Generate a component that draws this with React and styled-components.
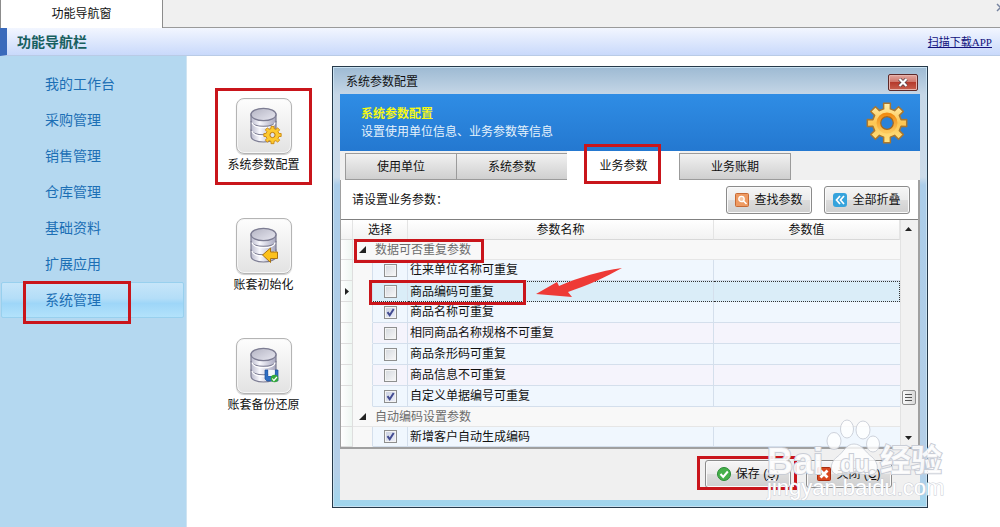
import React, { useState } from "react";
import styled, { createGlobalStyle, css } from "styled-components";

const GlobalStyle = createGlobalStyle`
  * {
    box-sizing: border-box;
  }
  body {
    margin: 0;
    background: #fff;
    overflow: hidden;
    font-family: "Liberation Sans", "Noto Sans CJK SC", sans-serif;
    font-size: 12px;
    line-height: 16px;
    color: #111;
  }
  button {
    font: inherit;
    color: inherit;
    padding: 0;
    cursor: pointer;
  }
`;

//page shell
const Page = styled.div`
  min-height: 100vh;
  display: flex;
  flex-direction: column;
`;
const TopTabs = styled.div`
  display: flex;
  height: 28px;
`;
const TopTab = styled.button`
  width: 163px;
  background: #fff;
  border: 1px solid #8c8c8c;
  border-width: 0 1px;
`;
const TopFill = styled.div`
  flex: 1;
  display: flex;
  justify-content: flex-end;
  background: #f0f0f0;
  border-bottom: 1px solid #9a9a9a;
`;
const TopClose = styled.button`
  height: 14px;
  margin-right: -5px;
  border: none;
  background: none;
`;
const Header = styled.header`
  display: flex;
  align-items: center;
  justify-content: space-between;
  height: 28px;
  padding: 0 8px 0 10px;
  border-left: 7px solid #3a6abb;
  border-bottom: 1px solid #b9cbe6;
  background: linear-gradient(#f2f6ff, #c9d9fb);
  h1 {
    margin: 0;
    font-size: 14px;
    color: #17605f;
  }
  a {
    font-family: "Liberation Serif", "Noto Sans CJK SC", serif;
    font-size: 11px;
    color: #12127c;
  }
`;
const Main = styled.main`
  flex: 1;
  display: flex;
  align-items: stretch;
`;

//side navigation
const Side = styled.nav`
  flex: none;
  width: 187px;
  padding: 10px 2px 0 1px;
  border-right: 1px solid #cfe4f2;
  background: #b4d8f0;
`;
const SideLink = styled.a`
  position: relative;
  display: flex;
  align-items: center;
  height: 36px;
  padding-left: 43px;
  border: 1px solid transparent;
  border-radius: 2px;
  font-size: 14px;
  color: #1c6fb5;
  text-decoration: none;
  ${(p) =>
    p.$active &&
    css`
      border-color: #98d0ee;
      background: linear-gradient(#c6e5f9, #b4def8 45%, #9ed6f8 60%, #b2e2fb);
    `}
`;

const Mark = styled.span`
  position: absolute;
  z-index: 2;
  top: ${(p) => p.$top}px;
  left: ${(p) => p.$left}px;
  width: ${(p) => p.$w}px;
  height: ${(p) => p.$h}px;
  border: 3px solid #c9151b;
  pointer-events: none;
`;

//shortcuts
const Shortcuts = styled.div`
  flex: none;
  width: 145px;
  padding: 32px 20px 0 28px;
  display: flex;
  flex-direction: column;
  gap: 23px;
`;
const Shortcut = styled.button`
  display: flex;
  flex-direction: column;
  align-items: center;
  gap: 3px;
  height: 97px;
  padding-top: 7px;
  border: 3px solid ${(p) => (p.$marked ? "#c9151b" : "transparent")};
  background: none;
  white-space: nowrap;
`;
const Tile = styled.span`
  flex: none;
  display: flex;
  align-items: center;
  justify-content: center;
  width: 56px;
  height: 56px;
  border: 1px solid #b4b4b4;
  border-radius: 8px;
  background: linear-gradient(#fdfdfd, #e2e2e2);
  box-shadow: inset 0 0 0 1px #f6f6f6, 0 1px 1px #ccc;
`;

//dialog
const Dialog = styled.section`
  position: relative;
  flex: 1;
  align-self: flex-start;
  margin: 10px 72px 0 0;
  padding: 0 7px 7px;
  border: 1px solid #26394a;
  background: linear-gradient(#9dbad3, #c6d7e7 28px, #cddcea 110px, #abcde9 118px, #b5cfe8 92%, #9fd6ee);
  box-shadow: inset 0 0 0 1px #c9e2f2;
`;
const TitleBar = styled.div`
  display: flex;
  align-items: center;
  justify-content: space-between;
  height: 27px;
  padding: 3px 2px 0 6px;
`;
const CloseX = styled.button`
  display: flex;
  align-items: center;
  justify-content: center;
  width: 30px;
  height: 17px;
  border: 1px solid #5d2929;
  border-radius: 2px;
  background: linear-gradient(#e3a79f, #cf776c 45%, #b53a2c 50%, #c9614f);
  box-shadow: inset 0 0 0 1px #e7b3ac;
`;
const Banner = styled.div`
  display: flex;
  align-items: center;
  justify-content: space-between;
  height: 57px;
  padding: 0 11px 0 21px;
  background: linear-gradient(#2f8de5, #2478d0);
  color: #e6f2fb;
  line-height: 18px;
  h2 {
    margin: 0;
    font-size: 12px;
    color: #f5f814;
  }
  p {
    margin: 0;
  }
`;
const Tabs = styled.div`
  display: flex;
  align-items: flex-end;
  height: 29px;
  padding-left: 5px;
  background: #f0f0f0;
`;
const Tab = styled.button`
  position: relative;
  width: 112px;
  height: 27px;
  border: 1px solid #9b9b9b;
  margin-right: -1px;
  background: linear-gradient(#f1f1f1, #cfcfcf);
  ${(p) =>
    p.$active &&
    css`
      width: 113px;
      height: 29px;
      border-color: transparent;
      background: #fff;
    `}
`;
const Panel = styled.div`
  border: 1px solid #a0a0a0;
  border-width: 0 2px 2px 1px;
  background: #fff;
`;
const Tools = styled.div`
  display: flex;
  align-items: center;
  gap: 12px;
  height: 40px;
  padding: 0 8px 0 11px;
  border-bottom: 1px solid #808080;
  p {
    flex: 1;
    margin: 0;
  }
`;
const PushButton = styled.button`
  display: flex;
  align-items: center;
  justify-content: center;
  gap: 5px;
  width: 86px;
  height: 28px;
  border: 1px solid #8b8b8b;
  border-radius: 3px;
  background: linear-gradient(#f6f6f6, #ebebeb 48%, #dcdcdc 52%, #cfcfcf);
  box-shadow: inset 0 0 0 1px #fafafa;
  white-space: nowrap;
  svg {
    flex: none;
  }
`;

//grid
const GridWrap = styled.div`
  position: relative;
  display: flex;
`;
const Grid = styled.table`
  flex: 1;
  width: 100%;
  table-layout: fixed;
  border-collapse: separate;
  border-spacing: 0;
  th {
    height: 20px;
    padding: 0;
    font-weight: normal;
    background: linear-gradient(#fff, #f2f2f2);
    border-bottom: 1px solid #d8d8d8;
    border-right: 1px solid #e4e4e4;
  }
`;
const Cell = styled.td`
  height: ${(p) => (p.$short ? 20 : 21)}px;
  padding: 0;
  line-height: 16px;
  white-space: nowrap;
  border-bottom: 1px solid #d4dfec;
  border-right: 1px solid #d4dfec;
  background: ${(p) => p.$bg || "#f8f8f8"};
  ${(p) =>
    p.$focus &&
    css`
      border-top: 1px dotted #333;
      border-bottom: 1px dotted #333;
      background: #daedf8;
    `}
  &:last-child {
    border-right: ${(p) => (p.$focus ? "1px dotted #333" : "none")};
  }
`;
const Gutter = styled(Cell)`
  border-color: #dedede;
  background: linear-gradient(90deg, #fff, #eef6f2);
  text-align: center;
  svg {
    display: block;
    margin: 0 auto;
  }
`;
const Indent = styled(Cell)`
  border-bottom-color: #f8f8f8;
`;
const GroupCell = styled(Cell)`
  border-bottom-color: #e6e6e6;
`;
const GroupToggle = styled.button`
  display: flex;
  align-items: center;
  gap: 9px;
  height: 19px;
  padding-left: 6px;
  border: none;
  background: none;
  color: #6c6c6c;
`;
const Check = styled.input`
  appearance: none;
  display: block;
  width: 13px;
  height: 13px;
  margin: 0 auto;
  border: 1px solid #8e8f8f;
  background: linear-gradient(135deg, #d4d8de, #f8f8f8);
  box-shadow: inset 0 0 0 1px #f4f4f4;
  &:checked {
    background: url("data:image/svg+xml,%3Csvg xmlns='http://www.w3.org/2000/svg' viewBox='0 0 11 11'%3E%3Cpath d='M2.5 5.2l2.2 3L8.7 2' fill='none' stroke='%23424b91' stroke-width='2'/%3E%3C/svg%3E"),
      linear-gradient(135deg, #c9d0e0, #eef0fa);
  }
`;
const Name = styled.label`
  display: block;
  padding-left: 2px;
`;
const Scroll = styled.div`
  display: flex;
  flex-direction: column;
  align-items: center;
  width: 18px;
  padding: 6px 2px 6px 0;
  border-left: 1px solid #e2e2e2;
  background: #f1f1f1;
`;
const Thumb = styled.span`
  display: flex;
  flex-direction: column;
  align-items: center;
  justify-content: center;
  gap: 2px;
  width: 14px;
  height: 15px;
  margin: auto 0 29px;
  border: 1px solid #8f8f8f;
  border-radius: 2px;
  background: linear-gradient(90deg, #fafafa, #d8d8d8);
  i {
    width: 7px;
    height: 1px;
    background: #555;
  }
`;
const Arrow = styled.svg`
  position: absolute;
  z-index: 2;
  top: 46px;
  left: 193px;
`;
const Footer = styled.footer`
  display: flex;
  justify-content: flex-end;
  gap: 15px;
  height: 51px;
  padding: 11px 28px 0 0;
  background: #f0f0f0;
`;
const SaveBox = styled.span`
  position: relative;
`;
const Watermark = styled.svg`
  position: absolute;
  z-index: 3;
  right: -19px;
  bottom: 0;
  pointer-events: none;
`;

//icons
const gearPath = (cx, cy, outer, inner, teeth, wide) => {
  const pts = [];
  const step = (Math.PI * 2) / teeth;
  for (let i = 0; i < teeth; i++) {
    const a = i * step - Math.PI / 2;
    [
      [inner, -wide * 1.1],
      [outer, -wide * 0.8],
      [outer, wide * 0.8],
      [inner, wide * 1.1],
    ].forEach(([r, off]) => {
      const t = a + off * step;
      pts.push(`${(cx + r * Math.cos(t)).toFixed(2)} ${(cy + r * Math.sin(t)).toFixed(2)}`);
    });
  }
  return `M${pts.join("L")}Z`;
};

const Database = ({ kind }) => (
  <svg width="40" height="44" viewBox="0 0 40 44">
    <defs>
      <linearGradient id={`db-${kind}`}>
        <stop offset="0" stopColor="#b9b9cc" />
        <stop offset=".35" stopColor="#f8f8fd" />
        <stop offset="1" stopColor="#a5a5bd" />
      </linearGradient>
      <linearGradient id={`top-${kind}`} x2="1" y2="1">
        <stop offset="0" stopColor="#b3b3c2" />
        <stop offset="1" stopColor="#e9e9f2" />
      </linearGradient>
    </defs>
    <path
      d="M7 10v22c0 8 25 8 25 0V10z"
      fill={`url(#db-${kind})`}
      stroke="#7c7c92"
      strokeWidth="1.2"
    />
    <path d="M7 17c0 7 25 7 25 0M7 25.500c0 7 25 7 25 0" fill="none" stroke="#7c7c92" strokeWidth="1.2" />
    <path d="M8 18.500c1 7 23 7 23 0M8 27c1 7 23 7 23 0" fill="none" stroke="#fff" strokeWidth="1.2" />
    <ellipse cx="19.5" cy="10.5" rx="12.5" ry="6.2" fill={`url(#top-${kind})`} stroke="#7c7c92" strokeWidth="1.2" />
    {kind === "gear" && (
      <>
        <path d={gearPath(28.5, 31, 8.8, 6.6, 8, 0.27)} fill="#fdc92f" stroke="#c9860f" strokeWidth=".9" />
        <circle cx="28.5" cy="31" r="2.6" fill="#e3e3ea" stroke="#b9780c" />
      </>
    )}
    {kind === "back" && (
      <path d="M18.5 31l8-7v4h7v6.500h-7v4z" fill="#fcc11c" stroke="#a97313" strokeWidth="1" />
    )}
    {kind === "save" && (
      <>
        <path d="M21 26h3v6h7v-6h3v11H23l-2-2z" fill="#2f6fc4" stroke="#1c4f99" strokeWidth=".7" />
        <path d="M24.300 26h6.500v6h-6.500z" fill="#f2f7fc" />
        <circle cx="30.5" cy="34.5" r="3.8" fill="#35a83c" />
        <path d="M28.3 34.500l1.600 2 3-3.500" fill="none" stroke="#fff" strokeWidth="1.2" />
      </>
    )}
  </svg>
);

const BigGear = () => (
  <svg width="44" height="44" viewBox="0 0 44 44">
    <defs>
      <linearGradient id="gear" x2="0" y2="1">
        <stop offset="0" stopColor="#fff0ae" />
        <stop offset=".5" stopColor="#fdc653" />
        <stop offset="1" stopColor="#ffe485" />
      </linearGradient>
      <linearGradient id="ring" x2="0" y2="1">
        <stop offset="0" stopColor="#f08c12" />
        <stop offset="1" stopColor="#fcc75a" />
      </linearGradient>
    </defs>
    <path
      d={gearPath(22, 22, 20, 14.5, 8, 0.27)}
      fill="url(#gear)"
      stroke="#a9772f"
      strokeWidth="1.5"
      strokeLinejoin="round"
    />
    <circle cx="22" cy="22" r="8.5" fill="none" stroke="url(#ring)" strokeWidth="4" />
    <circle cx="22" cy="22" r="6.3" fill="#2b82d9" stroke="#a8671b" strokeWidth="1.2" />
  </svg>
);

const FindIcon = () => (
  <svg width="14" height="14" viewBox="0 0 14 14">
    <rect x=".5" y=".5" width="13" height="13" rx="1" fill="#ee9a62" stroke="#c76a35" />
    <circle cx="6.5" cy="6" r="2.7" fill="#f7c6a2" stroke="#fff" strokeWidth="1.3" />
    <path d="M8.5 8l3 3" stroke="#fff" strokeWidth="1.6" />
  </svg>
);
const FoldIcon = () => (
  <svg width="14" height="14" viewBox="0 0 14 14">
    <rect width="14" height="14" rx="3" fill="#36a3dc" />
    <path d="M7 3L3.500 7 7 11M11 3L7.500 7l3.500 4" fill="none" stroke="#fff" strokeWidth="1.7" />
  </svg>
);
const SaveIcon = () => (
  <svg width="14" height="14" viewBox="0 0 14 14">
    <circle cx="7" cy="7" r="6.5" fill="#46b04a" stroke="#2a8a34" />
    <path d="M3.500 7l2.700 3 4.600-5.500" fill="none" stroke="#fff" strokeWidth="2" />
  </svg>
);
const ExitIcon = () => (
  <svg width="14" height="14" viewBox="0 0 14 14">
    <rect x=".5" y=".5" width="13" height="13" rx="1" fill="#d9481f" stroke="#a82d10" />
    <path d="M3.500 3.500l7 7M10.500 3.500l-7 7" stroke="#fff" strokeWidth="2.8" />
  </svg>
);
const Triangle = ({ d, size = 7 }) => (
  <svg width={size} height={size} viewBox="0 0 7 7">
    <path d={d} fill="#222" />
  </svg>
);

const menu = ["我的工作台", "采购管理", "销售管理", "仓库管理", "基础资料", "扩展应用", "系统管理"];

const shortcuts = [
  { kind: "gear", text: "系统参数配置" },
  { kind: "back", text: "账套初始化" },
  { kind: "save", text: "账套备份还原" },
];

const tabs = ["使用单位", "系统参数", "业务参数", "业务账期"];

const groups = [
  {
    title: "数据可否重复参数",
    rows: [
      ["往来单位名称可重复", false],
      ["商品编码可重复", false],
      ["商品名称可重复", true],
      ["相同商品名称规格不可重复", false],
      ["商品条形码可重复", false],
      ["商品信息不可重复", false],
      ["自定义单据编号可重复", true],
    ],
  },
  { title: "自动编码设置参数", rows: [["新增客户自动生成编码", true]] },
];
const focused = "商品编码可重复";

const ParamGrid = () => {
  const [checked, setChecked] = useState(
    Object.fromEntries(groups.flatMap((g) => g.rows))
  );
  return (
    <GridWrap>
      <Grid>
        <colgroup>
          <col width="12" />
          <col width="20" />
          <col width="35" />
          <col width="306" />
          <col />
        </colgroup>
        <thead>
          <tr>
            <th></th>
            <th colSpan="2">选择</th>
            <th>参数名称</th>
            <th>参数值</th>
          </tr>
        </thead>
        <tbody>
          {groups.map((group, g) => (
            <React.Fragment key={group.title}>
              <tr>
                <Gutter $short />
                <GroupCell $short colSpan="4">
                  <GroupToggle type="button">
                    <Triangle d="M7 0v7H0z" />
                    {group.title}
                  </GroupToggle>
                </GroupCell>
              </tr>
              {group.rows.map(([name], i) => {
                const look = {
                  $bg: i % 2 ? "#f5f4fc" : "#f0f7fe",
                  $focus: name === focused,
                  $short: g === 1,
                };
                return (
                  <tr key={name}>
                    <Gutter $short={g === 1}>
                      {name === focused && <Triangle d="M2 0l4 3.500L2 7z" />}
                    </Gutter>
                    <Indent $short={g === 1} />
                    <Cell {...look}>
                      <Check
                        id={`p-${g}-${i}`}
                        type="checkbox"
                        checked={checked[name]}
                        onChange={() => setChecked({ ...checked, [name]: !checked[name] })}
                      />
                    </Cell>
                    <Cell {...look}>
                      <Name htmlFor={`p-${g}-${i}`}>{name}</Name>
                    </Cell>
                    <Cell {...look} />
                  </tr>
                );
              })}
            </React.Fragment>
          ))}
        </tbody>
      </Grid>
      <Scroll>
        <Triangle d="M0 5l3.500-4L7 5z" />
        <Thumb>
          <i />
          <i />
          <i />
        </Thumb>
        <Triangle d="M0 2l3.500 4L7 2z" />
      </Scroll>
      <Mark $top={19} $left={13} $w={130} $h={24} />
      <Mark $top={60} $left={28} $w={157} $h={25} />
      <Arrow width="90" height="34" viewBox="0 0 90 34">
        <path d="M88 2C66 5 46 11 25 20l-2-4L2 28l36 3-4-5c18-6 38-15 54-24z" fill="#ee3a36" />
      </Arrow>
    </GridWrap>
  );
};

const App = () => {
  const [tab, setTab] = useState("业务参数");
  return (
    <Page>
      <GlobalStyle />
      <TopTabs>
        <TopTab type="button">功能导航窗</TopTab>
        <TopFill>
          <TopClose type="button" aria-label="关闭">
            <svg width="9" height="9" viewBox="0 0 9 9">
              <path d="M1 1l7 7M8 1l-7 7" stroke="#7784a0" strokeWidth="1.5" />
            </svg>
          </TopClose>
        </TopFill>
      </TopTabs>
      <Header>
        <h1>功能导航栏</h1>
        <a href="#app">扫描下载APP</a>
      </Header>
      <Main>
        <Side>
          {menu.map((item) => (
            <SideLink key={item} href="#menu" $active={item === "系统管理"}>
              {item}
              {item === "系统管理" && <Mark $top={-2} $left={21} $w={108} $h={43} />}
            </SideLink>
          ))}
        </Side>
        <Shortcuts>
          {shortcuts.map(({ kind, text }) => (
            <Shortcut key={kind} type="button" $marked={kind === "gear"}>
              <Tile>
                <Database kind={kind} />
              </Tile>
              {text}
            </Shortcut>
          ))}
        </Shortcuts>
        <Dialog role="dialog" aria-label="系统参数配置">
          <TitleBar>
            系统参数配置
            <CloseX type="button" aria-label="关闭">
              <svg width="10" height="9" viewBox="0 0 10 9">
                <path d="M1.500 1l7 7M8.500 1l-7 7" stroke="#54424a" strokeWidth="3.6" />
                <path d="M1.500 1l7 7M8.500 1l-7 7" stroke="#fff" strokeWidth="2.2" />
              </svg>
            </CloseX>
          </TitleBar>
          <Banner>
            <div>
              <h2>系统参数配置</h2>
              <p>设置使用单位信息、业务参数等信息</p>
            </div>
            <BigGear />
          </Banner>
          <Tabs role="tablist">
            {tabs.map((name) => (
              <Tab
                key={name}
                type="button"
                role="tab"
                aria-selected={tab === name}
                $active={tab === name}
                onClick={() => setTab(name)}
              >
                {name}
                {name === "业务参数" && <Mark $top={-8} $left={16} $w={77} $h={40} />}
              </Tab>
            ))}
          </Tabs>
          <Panel>
            <Tools>
              <p>请设置业务参数：</p>
              <PushButton type="button">
                <FindIcon />
                查找参数
              </PushButton>
              <PushButton type="button">
                <FoldIcon />
                全部折叠
              </PushButton>
            </Tools>
            <ParamGrid />
          </Panel>
          <Footer>
            <SaveBox>
              <PushButton type="button">
                <SaveIcon />
                <span>
                  保存 (<u>S</u>)
                </span>
              </PushButton>
              <Mark $top={-4} $left={-8} $w={100} $h={34} />
            </SaveBox>
            <PushButton type="button">
              <ExitIcon />
              <span>
                关闭 (<u>C</u>)
              </span>
            </PushButton>
          </Footer>
          <Watermark width="180" height="88" viewBox="0 0 180 88" aria-hidden="true">
            <g fill="#fff" fillOpacity=".8" stroke="#c3c8d2" strokeOpacity=".8">
              <ellipse cx="68" cy="22" rx="7" ry="8.5" />
              <ellipse cx="81" cy="10" rx="6.5" ry="9" />
              <ellipse cx="97" cy="11" rx="7" ry="9" />
              <ellipse cx="107" cy="25" rx="6.5" ry="8" />
              <path d="M88 25c-8 0-10 8-17 13-8 6-8 18 3 18 6 0 9-2 14-2s9 2 15 2c10 0 11-11 3-18-7-5-10-13-18-13z" />
            </g>
            <g
              fill="#fff"
              fillOpacity=".9"
              stroke="#c9cdd6"
              strokeWidth="2"
              paintOrder="stroke"
              fontWeight="bold"
              fontFamily="Liberation Sans, Noto Sans CJK SC, sans-serif"
            >
              <text x="1" y="55" fontSize="36">
                Bai
              </text>
              <text x="74" y="53" fontSize="24">
                du
              </text>
              <text x="114" y="52" fontSize="31">
                经验
              </text>
            </g>
            <text
              x="1"
              y="76"
              fontSize="22"
              fontFamily="Liberation Sans, sans-serif"
              fill="#fff"
              stroke="#c9cdd6"
              strokeWidth="1"
              paintOrder="stroke"
            >
              jingyan.baidu.com
            </text>
          </Watermark>
        </Dialog>
      </Main>
    </Page>
  );
};

export default App;
